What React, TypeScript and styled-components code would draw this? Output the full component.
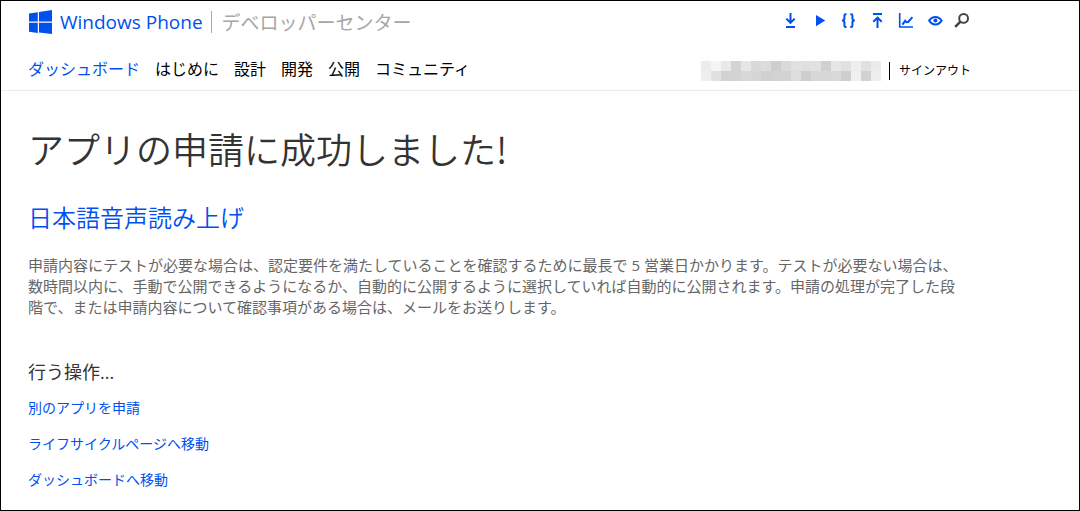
import React from "react";
import styled, { createGlobalStyle } from "styled-components";

const blue = "#0050ef";
const latinFirst = `"Open Sans", "Noto Sans CJK JP", sans-serif`;
const japanese = `"Noto Sans CJK JP", sans-serif`;

const GlobalStyle = createGlobalStyle`
  *, *::before, *::after { box-sizing: border-box; }
  body {
    margin: 0;
    background: #fff;
    color: #000;
    font-family: ${latinFirst};
  }
  h1, h2, h3, p, ul { margin: 0; padding: 0; font-weight: inherit; }
  ul { list-style: none; }
  a { color: inherit; text-decoration: none; }
  svg { display: block; }
`;

const Page = styled.div`
  min-height: 100vh;
  border: 1px solid #000;
`;

const Header = styled.header`
  border-bottom: 1px solid #ebebeb;
`;

const Container = styled.div`
  max-width: 971px;
  padding-left: 27px;
`;

const TopRow = styled(Container)`
  display: flex;
  justify-content: space-between;
  align-items: flex-start;
  height: 44px;
  padding-top: 9px;
`;

const Brand = styled.a`
  display: flex;
  align-items: center;
  height: 24px;
  padding-left: 1px;
`;

const Wordmark = styled.span`
  margin-left: 8px;
  color: ${blue};
  font-size: 19px;
  line-height: 24px;
  font-weight: 500;
`;

const SiteName = styled.span`
  margin-left: 8px;
  padding-left: 10px;
  border-left: 1px solid #aaa;
  color: #a6a6a6;
  font-family: ${japanese};
  font-size: 19px;
  line-height: 22px;
`;

const Tools = styled.nav`
  display: flex;
  padding-top: 1px;
`;

const Tool = styled.a<{ $dark?: boolean }>`
  color: ${(p) => (p.$dark ? "#444" : blue)};
`;

const NavRow = styled(Container)`
  display: flex;
  justify-content: space-between;
  align-items: center;
  height: 45px;
  padding-top: 4px;
`;

const NavList = styled.ul`
  display: flex;
  gap: 15px;
  padding-bottom: 2px;
  font-size: 16px;
  line-height: 24px;
`;

const NavLink = styled.a<{ $active?: boolean }>`
  color: ${(p) => (p.$active ? blue : "#000")};
`;

const Account = styled.div`
  display: flex;
  align-items: center;
  padding-top: 2px;
`;

const SignOut = styled.a`
  margin-left: 8px;
  padding: 0 1px 0 9px;
  border-left: 1px solid #000;
  font-size: 12px;
  line-height: 18px;
`;

const Main = styled(Container).attrs({ as: "main" })`
  padding-top: 33px;
  padding-bottom: 20px;
`;

const Title = styled.h1`
  color: #333;
  font-family: ${japanese};
  font-size: 36px;
  line-height: 48px;
  font-weight: 350;
`;

const AppName = styled.h2`
  margin-top: 30px;
  color: ${blue};
  font-size: 24px;
  line-height: 32px;
  font-weight: 350;
`;

const Description = styled.p`
  max-width: 940px;
  margin-top: 21px;
  color: #666;
  font-size: 15px;
  line-height: 21px;
`;

const ActionsTitle = styled.h3`
  margin-top: 42px;
  color: #333;
  font-size: 18px;
  line-height: 24px;
`;

const Actions = styled.ul`
  display: grid;
  gap: 16px;
  margin-top: 14px;
  color: ${blue};
  font-size: 14px;
  line-height: 20px;
`;

const WindowsLogo = () => (
  <svg width="23" height="24" viewBox="0 0 23 24" fill={blue} aria-hidden="true">
    <path d="M0 3.5 8.8 2.3V11.5H0ZM10 2.1 23 0V11.5H10ZM0 12.7H8.8V22.9L0 21.7ZM10 12.7H23V24L10 22.4Z" />
  </svg>
);

const ToolIcon = ({ width = 29, children }: { width?: number; children: React.ReactNode }) => (
  <svg
    width={width}
    height="20"
    viewBox={`0 0 ${width} 20`}
    fill="none"
    stroke="currentColor"
    strokeWidth="2"
    aria-hidden="true"
  >
    {children}
  </svg>
);

const tools = [
  { label: "ダウンロード", art: <path d="M14.5 2V12M10.3 7.6 14.5 11.8 18.7 7.6M10 16H19" /> },
  { label: "再生", art: <path d="M11 4 20.2 9.6 11 15.2Z" fill="currentColor" stroke="none" /> },
  {
    label: "コード",
    art: (
      <path d="M12.5 3.3H11.6Q10.4 3.3 10.4 4.5V7.6Q10.4 9.6 8 9.6Q10.4 9.6 10.4 11.6V14.8Q10.4 16 11.6 16H12.5M16.3 3.3H17.2Q18.4 3.3 18.4 4.5V7.6Q18.4 9.6 20.8 9.6Q18.4 9.6 18.4 11.6V14.8Q18.4 16 17.2 16H16.3" />
    ),
  },
  { label: "アップロード", art: <path d="M10 3H19M14.5 17V6.5M10.3 10.8 14.5 6.6 18.7 10.8" /> },
  {
    label: "レポート",
    art: (
      <>
        <path d="M7.7 2V16H21" strokeWidth="1.6" />
        <path d="M10.4 13.6 13.2 9.8 14.6 11.2 16.2 11 20.4 6.2" />
      </>
    ),
  },
  {
    label: "表示",
    art: (
      <>
        <path d="M8.2 9.6Q10.6 5.9 14.4 5.9T20.6 9.6Q18.2 13.4 14.4 13.4T8.2 9.6Z" />
        <circle cx="14.4" cy="9.6" r="2" fill="currentColor" stroke="none" />
      </>
    ),
  },
];

const mosaic = [
  "ec f5 e9 d3 e6 d8 dc ce da e1 df e1 d0 e6 e1 ee e1 eb",
  "ee e1 d2 d3 d8 d6 d0 d2 d3 dd ce d7 d7 d9 cf f0 d2 ee",
].map((row) => row.split(" "));

const MaskedAccount = () => (
  <svg width="180" height="20" viewBox="0 0 180 20" shapeRendering="crispEdges" aria-hidden="true">
    {mosaic.map((row, y) =>
      row.map((v, x) => (
        <rect key={`${x}-${y}`} x={x * 10} y={y * 10} width="10" height="10" fill={`#${v}${v}${v}`} />
      ))
    )}
  </svg>
);

const sections = ["ダッシュボード", "はじめに", "設計", "開発", "公開", "コミュニティ"];
const actions = ["別のアプリを申請", "ライフサイクルページへ移動", "ダッシュボードへ移動"];

export default function App() {
  return (
    <Page lang="ja">
      <GlobalStyle />
      <Header>
        <TopRow>
          <Brand href="#">
            <WindowsLogo />
            <Wordmark>Windows Phone</Wordmark>
            <SiteName>デベロッパーセンター</SiteName>
          </Brand>
          <Tools>
            {tools.map((t) => (
              <Tool key={t.label} href="#" aria-label={t.label}>
                <ToolIcon>{t.art}</ToolIcon>
              </Tool>
            ))}
            <Tool $dark href="#" aria-label="検索">
              <ToolIcon width={22}>
                <circle cx="13.6" cy="7.4" r="4.4" />
                <path d="M10.4 10.6 5.2 15.8" strokeWidth="2.6" />
              </ToolIcon>
            </Tool>
          </Tools>
        </TopRow>
        <NavRow>
          <nav>
            <NavList>
              {sections.map((s, i) => (
                <li key={s}>
                  <NavLink href="#" $active={i === 0}>
                    {s}
                  </NavLink>
                </li>
              ))}
            </NavList>
          </nav>
          <Account>
            <MaskedAccount />
            <SignOut href="#">サインアウト</SignOut>
          </Account>
        </NavRow>
      </Header>
      <Main>
        <Title>アプリの申請に成功しました!</Title>
        <AppName>
          <a href="#">日本語音声読み上げ</a>
        </AppName>
        <Description>
          申請内容にテストが必要な場合は、認定要件を満たしていることを確認するために最長で 5
          営業日かかります。テストが必要ない場合は、数時間以内に、手動で公開できるようになるか、自動的に公開するように選択していれば自動的に公開されます。申請の処理が完了した段階で、または申請内容について確認事項がある場合は、メールをお送りします。
        </Description>
        <ActionsTitle>行う操作...</ActionsTitle>
        <Actions>
          {actions.map((a) => (
            <li key={a}>
              <a href="#">{a}</a>
            </li>
          ))}
        </Actions>
      </Main>
    </Page>
  );
}
